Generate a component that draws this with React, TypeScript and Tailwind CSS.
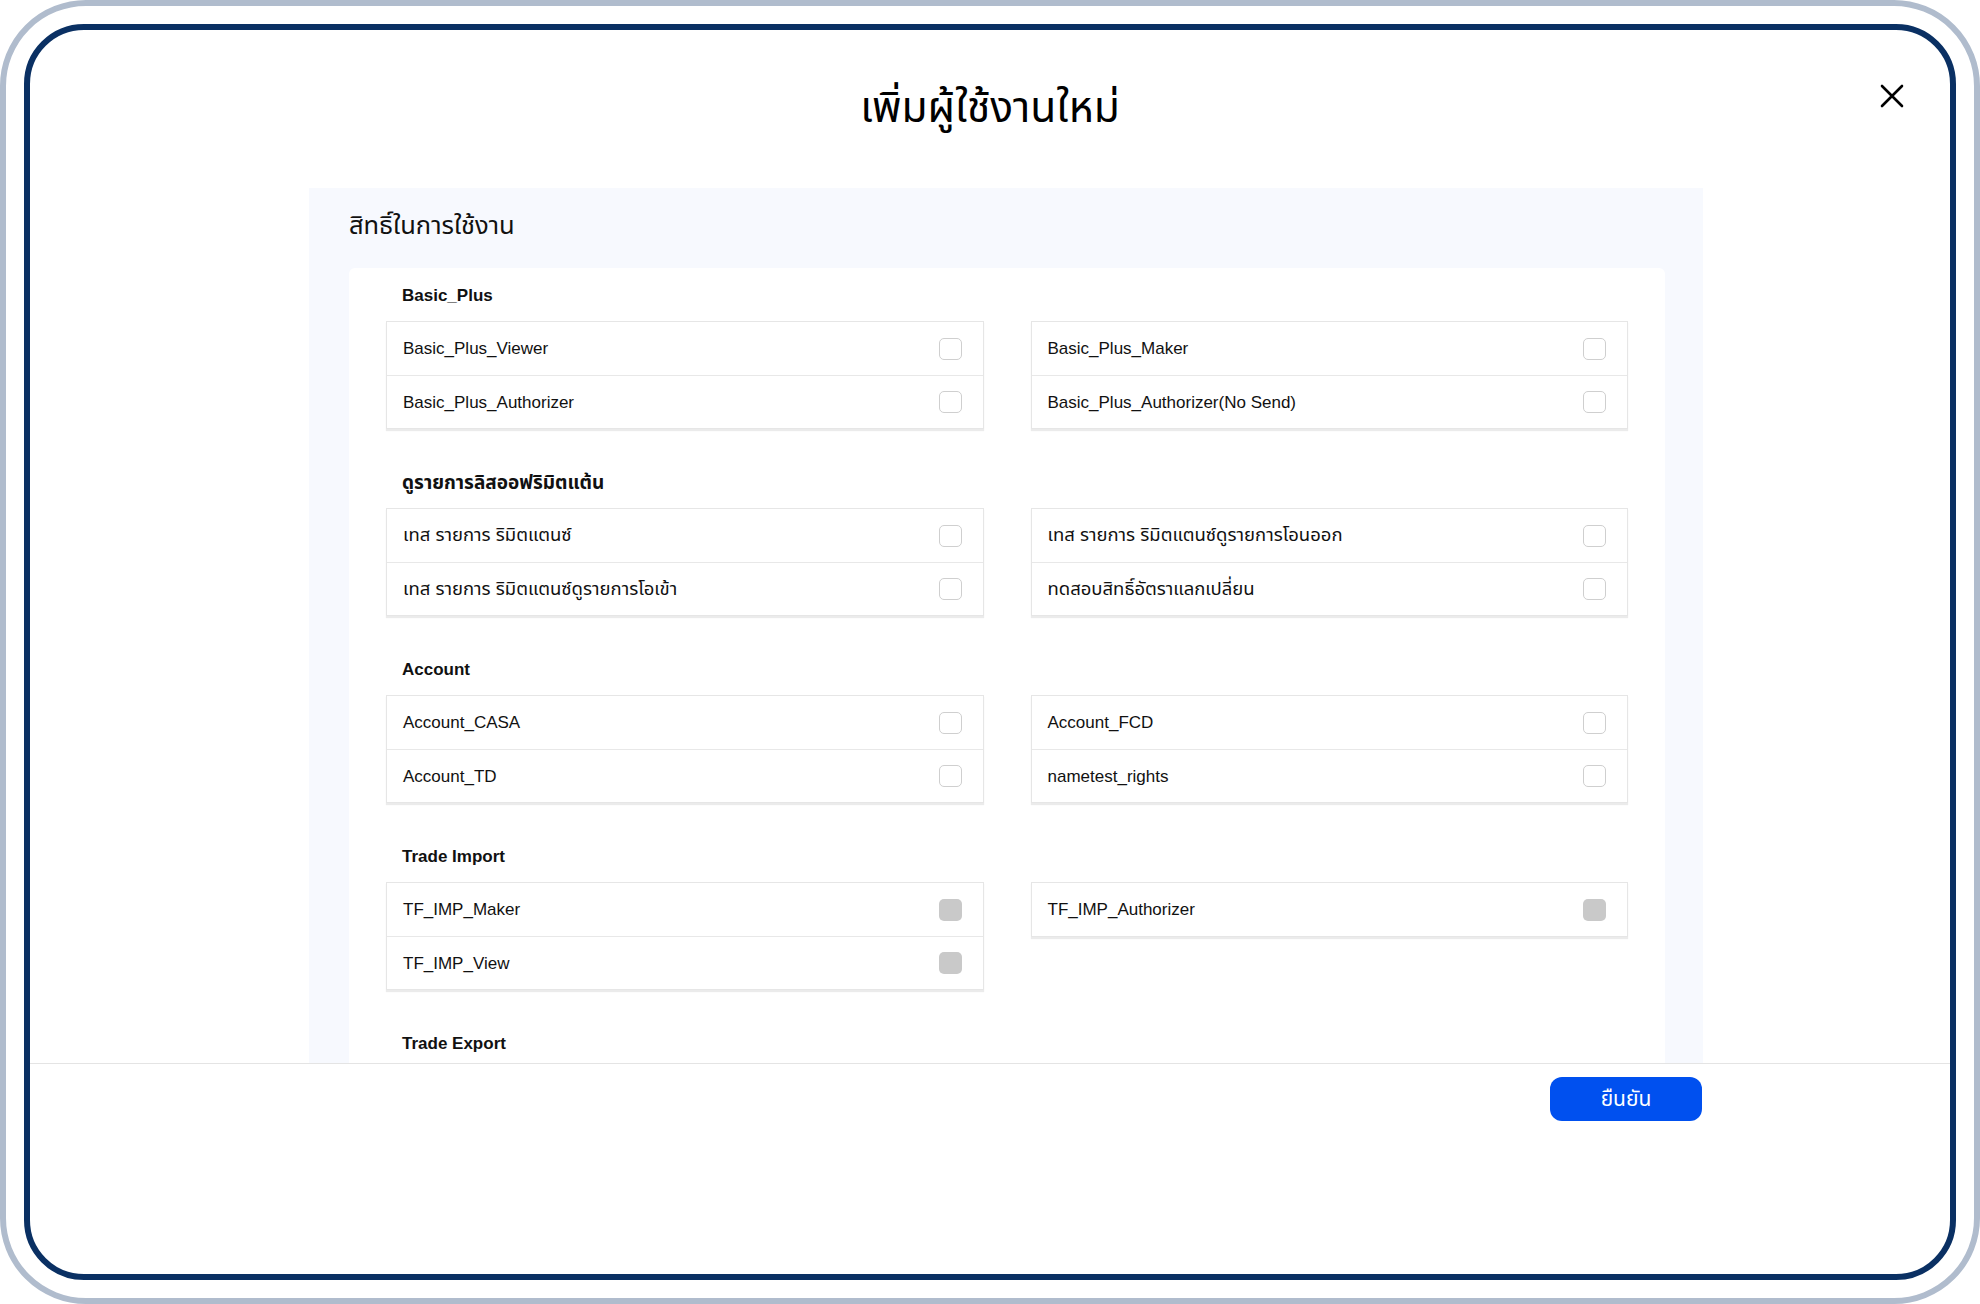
import React from "react";

type Item = { label: string; disabled?: boolean };
type Section = { title: string; left: Item[]; right: Item[] };

const sections: Section[] = [
  {
    title: "Basic_Plus",
    left: [{ label: "Basic_Plus_Viewer" }, { label: "Basic_Plus_Authorizer" }],
    right: [{ label: "Basic_Plus_Maker" }, { label: "Basic_Plus_Authorizer(No Send)" }],
  },
  {
    title: "ดูรายการลิสออฟริมิตแต้น",
    left: [{ label: "เทส รายการ ริมิตแตนซ์" }, { label: "เทส รายการ ริมิตแตนซ์ดูรายการโอเข้า" }],
    right: [{ label: "เทส รายการ ริมิตแตนซ์ดูรายการโอนออก" }, { label: "ทดสอบสิทธิ์อัตราแลกเปลี่ยน" }],
  },
  {
    title: "Account",
    left: [{ label: "Account_CASA" }, { label: "Account_TD" }],
    right: [{ label: "Account_FCD" }, { label: "nametest_rights" }],
  },
  {
    title: "Trade Import",
    left: [
      { label: "TF_IMP_Maker", disabled: true },
      { label: "TF_IMP_View", disabled: true },
    ],
    right: [{ label: "TF_IMP_Authorizer", disabled: true }],
  },
  {
    title: "Trade Export",
    left: [],
    right: [],
  },
];

const FONT = "font-['Liberation_Sans','Noto_Sans_Thai','Noto_Sans',sans-serif]";
const isThai = (s: string) => /[\u0E00-\u0E7F]/.test(s);

function Box({ items }: { items: Item[] }) {
  if (items.length === 0) return <div />;
  return (
    <div className="self-start border border-[#e6e6e6] bg-white shadow-[0_2px_1px_rgba(0,0,0,0.08)]">
      {items.map((it, i) => (
        <div
          key={i}
          className={`flex h-[53px] items-center justify-between pl-[16px] pr-[21px] ${
            i > 0 ? "border-t border-[#e8e8e8]" : ""
          }`}
        >
          <span className={`${isThai(it.label) ? "text-[18.5px]" : "text-[17px]"} leading-none text-[#111]`}>
            {it.label}
          </span>
          {it.disabled ? (
            <span className="block h-[22px] w-[23px] rounded-[5px] bg-[#c9c9c9]" />
          ) : (
            <span className="block h-[22px] w-[23px] rounded-[5px] border-[1.5px] border-[#cfcfcf] bg-white" />
          )}
        </div>
      ))}
    </div>
  );
}

export default function App() {
  return (
    <div className={`h-[1304px] w-[1980px] bg-white ${FONT}`}>
      <div className="h-full w-full rounded-[86px] border-[6px] border-[#b0bccd] p-[18px]">
        <div className="relative flex h-full flex-col overflow-hidden rounded-[60px] border-[6px] border-[#0a3063] bg-white">
          {/* header */}
          <div className="flex h-[158px] shrink-0 items-start justify-center pt-[54px]">
            <h1 className="text-[42.5px] leading-[48px] text-black">เพิ่มผู้ใช้งานใหม่</h1>
          </div>
          <button className="absolute right-[46px] top-[54px] flex h-[24px] w-[24px] items-center justify-center">
            <svg width="24" height="24" viewBox="0 0 24 24" fill="none">
              <path d="M2 2L22 22M22 2L2 22" stroke="#000" strokeWidth="2.6" strokeLinecap="round" />
            </svg>
          </button>

          {/* scroll body */}
          <div className="h-[875px] shrink-0 overflow-hidden">
            <div className="ml-[279px] w-[1394px] bg-[#f7f9fe] pb-[40px]">
              <div className="pl-[40px] pt-[20px] text-[25.5px] leading-[34px] text-[#111]">สิทธิ์ในการใช้งาน</div>
              <div className="mx-[40px] mr-[38px] mt-[26px] min-h-[900px] rounded-[6px] bg-white px-[37px] pb-[40px] pt-[17px]">
                {sections.map((s, si) => (
                  <div key={si} className={si > 0 ? "mt-[43px]" : ""}>
                    <div
                      className={`pl-[16px] ${
                        isThai(s.title) ? "text-[19px]" : "text-[17px]"
                      } font-bold leading-[22px] text-[#111]`}
                    >
                      {s.title}
                    </div>
                    {(s.left.length > 0 || s.right.length > 0) && (
                      <div className="mt-[14px] grid grid-cols-2 gap-x-[47px]">
                        <Box items={s.left} />
                        <Box items={s.right} />
                      </div>
                    )}
                  </div>
                ))}
              </div>
            </div>
          </div>

          {/* footer */}
          <div className="flex flex-1 items-start justify-end border-t border-[#e4e4e4] pr-[248px] pt-[13px]">
            <button className="flex h-[44px] w-[152px] items-center justify-center rounded-[12px] bg-[#0050ef] text-[21px] text-white">
              ยืนยัน
            </button>
          </div>
        </div>
      </div>
    </div>
  );
}
